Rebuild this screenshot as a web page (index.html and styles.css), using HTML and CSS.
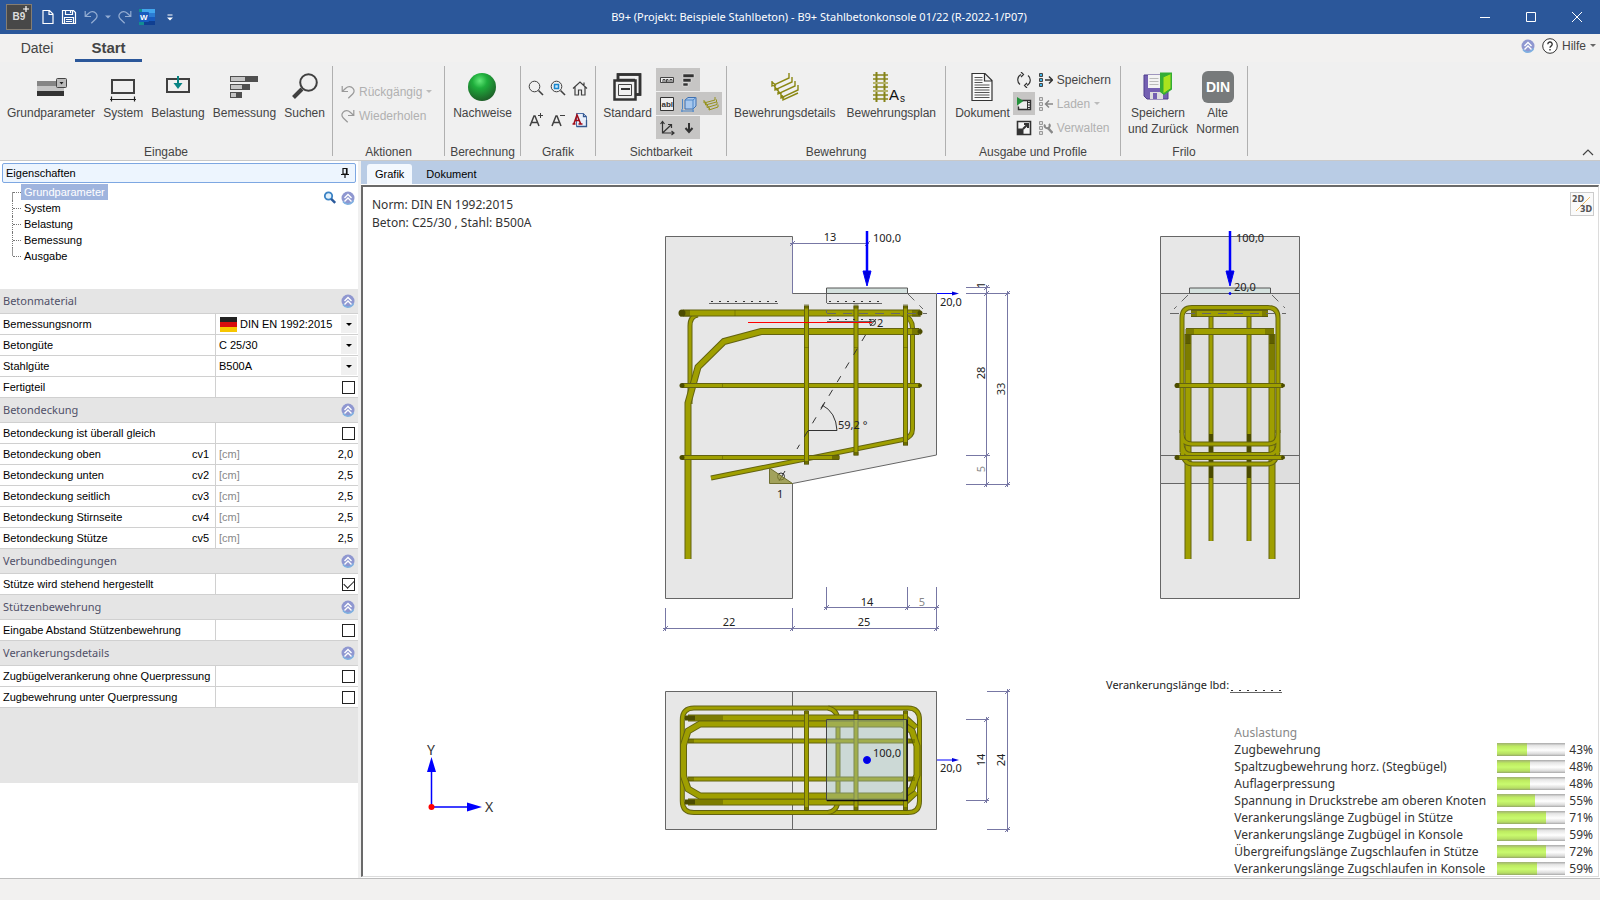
FILE: index.html
```html
<!DOCTYPE html>
<html lang="de">
<head>
<meta charset="utf-8">
<title>B9+ Stahlbetonkonsole</title>
<link rel="stylesheet" href="styles.css">
</head>
<body>
<svg class="defs" aria-hidden="true">
  <symbol id="chev" viewBox="0 0 14 14">
    <circle cx="7" cy="7" r="6.5" fill="#8f97d0"/><path d="M2 10.5a6 6 0 0 0 10.5-1" fill="none" stroke="#7fb2e2" stroke-width="1.5"/>
    <path d="M3.500 7 7 3.600 10.500 7M3.500 10.500 7 7.100 10.500 10.500" fill="none" stroke="#fff" stroke-width="1.400"/>
  </symbol>
  <symbol id="undo" viewBox="0 0 14 14"><path d="M1.200 1v5.500H7M1.500 6.200 5 3a4.800 4.800 0 0 1 7 .3c1.500 2 1.200 4.200-.3 5.700L7.300 13.300" fill="none" stroke="currentColor" stroke-width="1.200"/></symbol>
  <symbol id="redo" viewBox="0 0 14 14"><path d="M12.800 1v5.500H7M12.500 6.200 9 3a4.800 4.800 0 0 0-7 .3C.5 5.300.8 7.500 2.300 9l4.400 4.300" fill="none" stroke="currentColor" stroke-width="1.200"/></symbol>
  <symbol id="slots" viewBox="0 0 14 14"><path d="M.5.500h3v3h-3zM.5 5.500h3v3h-3zM.5 10.500h3v3h-3z" stroke="currentColor"/></symbol>
</svg>

<header class="titlebar">
  <div class="quick">
    <svg class="logo" viewBox="0 0 26 26"><rect x=".5" y=".5" width="25" height="25" fill="#484848" stroke="#857d72"/><path d="M20 2v6M17 5h6" stroke="#fff" stroke-width="1.200"/><text x="6.500" y="16" font-size="10" font-weight="700" fill="#ddd">B9</text></svg>
    <button aria-label="Neu"><svg width="12" height="16" viewBox="0 0 12 16"><path d="M1 1.500h6.500l3.500 3.500v9.500H1zM7 1.500V5.500h4" fill="none" stroke="#fff" stroke-width="1.200"/></svg></button>
    <button aria-label="Speichern"><svg width="16" height="16" viewBox="0 0 16 16"><path d="M1.500 1.500h11l2 2v11h-13zM4.500 1.500v4h7v-4M3.500 14.500v-6h9v6M5 10.500h6M5 12.500h6M9.500 2v2" fill="none" stroke="#fff" stroke-width="1.200"/></svg></button>
    <button aria-label="Rückgängig" class="pale"><svg width="14" height="14"><use href="#undo"/></svg></button>
    <button aria-label="Verlauf" class="pale"><svg width="6" height="4"><path d="M0 .5h6L3 3.500z" fill="currentColor"/></svg></button>
    <button aria-label="Wiederholen" class="pale"><svg width="14" height="14"><use href="#redo"/></svg></button>
    <button aria-label="Word"><svg width="16" height="16" viewBox="0 0 16 16"><path d="M3 0h13v4H3z" fill="#41a5ee"/><path d="M3 4h13v4H3z" fill="#2b7cd3"/><path d="M3 8h13v4H3z" fill="#185abd"/><path d="M3 12h13v4H3z" fill="#103f91"/><path d="M0 0h3v3H0zM0 13h5v3H0z" fill="#128d92"/><rect y="3" width="10" height="10" rx="1" fill="#185abd"/><text x="1" y="11" font-size="8" font-weight="700" fill="#fff">W</text></svg></button>
    <button aria-label="Anpassen" class="custom"><svg width="6" height="7"><path d="M.5 1h5" stroke="#fff"/><path d="M0 3.500h6L3 6.500z" fill="#fff"/></svg></button>
  </div>
  <h1 class="caption">B9+ (Projekt: Beispiele Stahlbeton) - B9+ Stahlbetonkonsole 01/22 (R-2022-1/P07)</h1>
  <div class="winctl">
    <button aria-label="Minimieren"><svg width="10" height="10"><path d="M0 5.500h10" stroke="#fff"/></svg></button>
    <button aria-label="Maximieren"><svg width="10" height="10"><path d="M.5.500h9v9h-9z" fill="none" stroke="#fff"/></svg></button>
    <button aria-label="Schließen"><svg width="10" height="10"><path d="M0 0 10 10M10 0 0 10" stroke="#fff"/></svg></button>
  </div>
</header>

<nav class="tabs">
  <button class="tab">Datei</button>
  <button class="tab active">Start</button>
  <div class="help">
    <svg width="14" height="14"><use href="#chev"/></svg>
    <svg width="16" height="16" viewBox="0 0 16 16"><circle cx="8" cy="8" r="7.300" fill="#fff" stroke="#333"/><path d="M5.800 6.200a2.200 2.200 0 1 1 3.300 1.900c-.8.500-1.100.8-1.100 1.700M8 11v1.500" fill="none" stroke="#333" stroke-width="1.400"/></svg>
    <button>Hilfe</button>
    <svg width="6" height="4"><path d="M0 0h6L3 3z" fill="#666"/></svg>
  </div>
</nav>

<section class="ribbon">
  <div class="group g-input">
    <div class="tools spread">
      <button class="big"><svg viewBox="0 0 32 32"><path d="M2 10h27v5H2z" fill="#858585"/><path d="M2 15h27v5H2z" fill="#c4c4c4"/><path d="M2 20h27v5H2z" fill="#333"/><rect x="21.500" y="7.500" width="10" height="9" rx="1" fill="#bbb" stroke="#444"/><path d="M24.500 11h4l-2 2.500z" fill="#222"/></svg>Grundparameter</button>
      <button class="big"><svg viewBox="0 0 32 32"><path d="M5 9h22v13H5z" fill="none" stroke="#404040" stroke-width="2"/><path d="M3 28.500h26M4.500 25.500v5M27.500 25.500v5" stroke="#222" stroke-width="1.200"/></svg>System</button>
      <button class="big"><svg viewBox="0 0 32 32"><path d="M5 8h22v13H5z" fill="none" stroke="#404040" stroke-width="2"/><path d="M16 5v8" stroke="#078383" stroke-width="2"/><path d="M11.500 12h9L16 18z" fill="#078383"/></svg>Belastung</button>
      <button class="big"><svg viewBox="0 0 32 32"><path d="M2 5h28v6H2zM2 13h20v6H2zM2 21h12v6H2z" fill="#505050"/><path d="M3 6h14v4H3zM3 14h11v4H3zM3 22h5v4H3z" fill="#c5c5c5"/></svg>Bemessung</button>
      <button class="big"><svg viewBox="0 0 32 32"><circle cx="19.500" cy="11.500" r="8.300" fill="none" stroke="#404040" stroke-width="2"/><path d="M13 18 4.500 26.500" stroke="#404040" stroke-width="4"/></svg>Suchen</button>
    </div>
    <h2>Eingabe</h2>
  </div>
  <div class="group g-actions">
    <div class="tools stack">
      <button class="small" disabled><svg width="14" height="14"><use href="#undo"/></svg>Rückgängig<svg width="6" height="4"><path d="M0 0h6L3 3z" fill="#bbb"/></svg></button>
      <button class="small" disabled><svg width="14" height="14"><use href="#redo"/></svg>Wiederholen</button>
    </div>
    <h2>Aktionen</h2>
  </div>
  <div class="group g-calc">
    <div class="tools">
      <button class="big"><svg viewBox="0 0 32 32"><defs><radialGradient id="ball" cx=".42" cy=".28" r=".75"><stop offset="0" stop-color="#63e878"/><stop offset=".35" stop-color="#1fae3c"/><stop offset="1" stop-color="#1e5a27"/></radialGradient></defs><circle cx="16" cy="16" r="14" fill="url(#ball)"/></svg>Nachweise</button>
    </div>
    <h2>Berechnung</h2>
  </div>
  <div class="group g-graphic">
    <div class="tools icons">
      <button aria-label="Zoom"><svg viewBox="0 0 16 16"><circle cx="6.500" cy="6.500" r="5.300" fill="none" stroke="#404040"/><path d="m10.500 10.500 4.500 4.500" stroke="#404040" stroke-width="1.600"/></svg></button>
      <button aria-label="Zoom Fenster"><svg viewBox="0 0 16 16"><circle cx="6.500" cy="6.500" r="5.300" fill="none" stroke="#404040"/><path d="m10.500 10.500 4.500 4.500" stroke="#404040" stroke-width="1.600"/><path d="M4.500 4.500h4v4h-4z" fill="#cfe9fb" stroke="#1787cf" stroke-width="1.500"/></svg></button>
      <button aria-label="Gesamtansicht"><svg viewBox="0 0 16 16"><path d="M1 8.500 8 2l7 6.500M3 7v8h3.500v-5h3v5H13V7M12 5V2.500" fill="none" stroke="#404040" stroke-width="1.200"/></svg></button>
      <button aria-label="Schrift größer"><svg viewBox="0 0 16 16"><path d="M2 14 6 4h1l4 10M3.500 10.500h6" fill="none" stroke="#404040" stroke-width="1.500"/><path d="M12.500 1v5M10 3.500h5" stroke="#404040"/></svg></button>
      <button aria-label="Schrift kleiner"><svg viewBox="0 0 16 16"><path d="M2 14 6 4h1l4 10M3.500 10.500h6" fill="none" stroke="#404040" stroke-width="1.500"/><path d="M10 3.500h5" stroke="#404040"/></svg></button>
      <button aria-label="Schriftart"><svg viewBox="0 0 16 16"><path d="M4.500 1.500h7l3 3v10h-10z" fill="#e8effb" stroke="#4a6fa8"/><path d="M11.500 1.500v3h3M14.500 8v6.500h-10" fill="none" stroke="#35588f" stroke-width="1.300"/><path d="M2 11.500 5 3l3.500 8.500M3.500 8.500h4M.5 12h3M6.500 12h4" fill="none" stroke="#a00d18" stroke-width="1.600"/></svg></button>
    </div>
    <h2>Grafik</h2>
  </div>
  <div class="group g-visible">
    <div class="tools">
      <button class="big"><svg viewBox="0 0 32 32"><path d="M7 3.500h22v20H7z" fill="#f0f0f0" stroke="#333" stroke-width="2.500"/><path d="M3.500 9.500h21v19h-21z" fill="#f0f0f0" stroke="#333" stroke-width="2.500"/><path d="M7.500 13.500h13v11h-13z" fill="none" stroke="#444"/><path d="M10 18h9" stroke="#333" stroke-width="2"/><path d="M7 9V3.500h22v20h-4M7 9h17" fill="none" stroke="#333" stroke-width="2.500"/></svg>Standard</button>
      <div class="toggles">
        <div class="trow">
          <button aria-label="Bemaßung"><svg viewBox="0 0 16 16"><path d="M1.500 5.500h13v5h-13z" fill="#eee" stroke="#444"/><path d="M4 10V7.500h2V10M7.500 10V7.500h1.500V10M11 10V7.500h2V10" fill="none" stroke="#444"/></svg></button>
          <button aria-label="Auslastung"><svg viewBox="0 0 16 16"><path d="M2 2h11v3.500H2zM2 6.500h8V10H2zM2 11h5v3H2z" fill="#333" stroke="#eee" stroke-width=".5"/></svg></button>
        </div>
        <div class="trow">
          <button aria-label="Text"><svg viewBox="0 0 16 16"><path d="M1.500 1.500h13v13h-13z" fill="#eee" stroke="#333"/><text x="2.500" y="11" font-size="8" font-weight="700" fill="#333">abl</text></svg></button>
          <button aria-label="Körper"><svg viewBox="0 0 16 16"><path d="M4 4 7 1.500h8V10l-3 3H4z" fill="#a8c8ee" stroke="#3f6fae"/><path d="M4 4h8v9M12 4l3-2.500M1.500 3v10M0 15h13M1 13v3M12 13v3" fill="none" stroke="#4d86c8"/></svg></button>
          <button aria-label="Bewehrung"><svg viewBox="0 0 16 16"><path d="M1 4v3l11-3V1M2.500 6.500v2.500l11-3V3.500M4 9v2.500l10-3V6M6 11.500V14l9-3V8.500M1.500 5l6 9" fill="none" stroke="#96921c"/></svg></button>
        </div>
        <div class="trow">
          <button aria-label="Koordinaten"><svg viewBox="0 0 16 16"><path d="M3.500 2v11h11M3.500 13 12 5M1.500 4l2-2.500 2 2.500M12.500 11l2.500 2-2.500 2M9 4.500h3.500V8" fill="none" stroke="#333" stroke-width="1.200"/></svg></button>
          <button aria-label="Last"><svg viewBox="0 0 16 16"><path d="M8 3v8" stroke="#333" stroke-width="2"/><path d="m4.500 8 3.500 4 3.500-4" fill="none" stroke="#333" stroke-width="2"/></svg></button>
        </div>
      </div>
    </div>
    <h2>Sichtbarkeit</h2>
  </div>
  <div class="group g-rebar">
    <div class="tools spread">
      <button class="big"><svg viewBox="0 0 32 32"><path d="M3 10v5l17-8V2M6 14v5l17-8V6M9 18v5l17-8v-5M12 22v5l17-8v-5M14 25v4l15-7M3 11l4 3.500M5 15l10 12" fill="none" stroke="#8a8712" stroke-width="1.400"/></svg>Bewehrungsdetails</button>
      <button class="big"><svg viewBox="0 0 32 32"><path d="M1.500 1v30M9.500 1v30" stroke="#86841a" stroke-width="2"/><path d="M-2 4h15M-2 8h15M-2 16h15M-2 24h15M-2 28h15" stroke="#86841a" stroke-width="1.300"/><path d="M-2 12h15M-2 20h15" stroke="#b5b36c" stroke-width="2"/><text x="14" y="29" font-size="15" fill="#111">A</text><text x="25" y="31" font-size="10" fill="#111">s</text></svg>Bewehrungsplan</button>
    </div>
    <h2>Bewehrung</h2>
  </div>
  <div class="group g-output">
    <div class="tools">
      <button class="big"><svg viewBox="0 0 32 32"><path d="M6 2.500h13l7 7v20H6zM18.500 3v7H26" fill="#fafafa" stroke="#333" stroke-width="1.200"/><path d="M8.500 6.500h8M8.500 9h8M8.500 11.500h8M8.500 14h15M8.500 16.500h15M8.500 19h15M8.500 21.500h15M8.500 24h15M8.500 26.500h15" stroke="#555"/></svg>Dokument</button>
      <div class="toggles plain">
        <button aria-label="Aktualisieren"><svg viewBox="0 0 16 16"><path d="M5 2.500A6 6 0 0 0 4 12.500M11 13.500A6 6 0 0 0 12 3.500M5 0l2.500 2.500L5 5M11 16l-2.500-2.500L11 11" fill="none" stroke="#333" stroke-width="1.200"/></svg></button>
        <button class="on" aria-label="Vorschau"><svg viewBox="0 0 16 16"><path d="M3.500 4.500h11v9h-12v-3" fill="#eee" stroke="#333" stroke-width="1.400"/><path d="M11.500 4.500v9M12 6.500h3M12 9h3M12 11.500h3" stroke="#333"/><path d="M1 1l6.500 4L1 9.500z" fill="#24923b"/></svg></button>
        <button aria-label="Extern öffnen"><svg viewBox="0 0 16 16"><path d="M1.500 1.500h13v13h-13z" fill="#f5f5f5" stroke="#333" stroke-width="1.600"/><path d="M1 8.500h6.500V15H1z" fill="#333"/><path d="m7 9 5-5M8 4h4v4" fill="none" stroke="#333" stroke-width="2"/></svg></button>
      </div>
      <div class="stack tight">
        <button class="small"><svg width="14" height="14" viewBox="0 0 14 14"><use href="#slots" fill="#42b3e6"/><path d="M6 7h7M10 3.500 13.500 7 10 10.500" fill="none" stroke="#333" stroke-width="1.500"/></svg>Speichern</button>
        <button class="small" disabled><svg width="14" height="14" viewBox="0 0 14 14"><use href="#slots" fill="#ddd"/><path d="M7 7h7M10 3.500 6.500 7l3.500 3.500" fill="none" stroke="#888" stroke-width="1.500"/></svg>Laden<svg width="6" height="4"><path d="M0 0h6L3 3z" fill="#bbb"/></svg></button>
        <button class="small" disabled><svg width="14" height="14" viewBox="0 0 14 14"><use href="#slots" fill="#ddd"/><path d="m8.500 6.500 5 5.500" stroke="#888" stroke-width="2.500"/><path d="M6 3.500a2.500 2.500 0 1 0 4-.5" fill="none" stroke="#888" stroke-width="2"/></svg>Verwalten</button>
      </div>
    </div>
    <h2>Ausgabe und Profile</h2>
  </div>
  <div class="group g-frilo">
    <div class="tools spread">
      <button class="big"><svg viewBox="0 0 32 32"><path d="M2 4h24v24H5l-3-3z" fill="#7460b2" stroke="#4e3d8c"/><path d="M6 4h13v13H6z" fill="#f3f3f3"/><path d="M7.500 7.500h9M7.500 10.500h9M7.500 13.500h9" stroke="#bbb"/><path d="M8 21h13v7H8z" fill="#ddd"/><path d="M11 22h4v6h-4z" fill="#7460b2"/><path d="M18 1.500h12v17l-8 5.500-4-3z" fill="#35ad35"/><path d="m21 6 8-3.500v15L21 23z" fill="#a9e31e" stroke="#35ad35"/></svg>Speichern<br>und Zurück</button>
      <button class="big"><svg viewBox="0 0 32 32"><rect width="32" height="32" rx="6" fill="#777a7b"/><text x="16" y="21" text-anchor="middle" font-size="14" font-weight="700" fill="#fff">DIN</text></svg>Alte<br>Normen</button>
    </div>
    <h2>Frilo</h2>
  </div>
  <button class="collapse" aria-label="Menüband reduzieren"><svg width="12" height="7"><path d="M1 6 6 1l5 5" fill="none" stroke="#444" stroke-width="1.200"/></svg></button>
</section>

<main class="main">
  <aside class="props">
    <div class="phead"><span>Eigenschaften</span><svg width="8" height="10" viewBox="0 0 8 10"><path d="M2 .5h4V6H2zM5.500 1v5M0 6.500h8M4 6.500V10" fill="none" stroke="#111" stroke-width="1.200"/></svg></div>
    <div class="treebox">
      <ul class="tree">
        <li><a href="#gp" class="sel">Grundparameter</a></li>
        <li><a href="#sys">System</a></li>
        <li><a href="#bel">Belastung</a></li>
        <li><a href="#bem">Bemessung</a></li>
        <li><a href="#aus">Ausgabe</a></li>
      </ul>
      <div class="treetools">
        <svg width="14" height="14" viewBox="0 0 14 14"><circle cx="5.500" cy="5" r="3.700" fill="#e2f1fc" stroke="#3b82c4" stroke-width="1.800"/><path d="m8.200 7.800 4 4" stroke="#2a5a9c" stroke-width="2.500"/></svg>
        <svg width="14" height="14"><use href="#chev"/></svg>
      </div>
    </div>
    <h3 id="gp">Betonmaterial<svg width="14" height="14"><use href="#chev"/></svg></h3>
    <div class="row"><label for="norm">Bemessungsnorm</label><div class="val"><svg class="flag" width="17" height="15"><path d="M0 0h17v5H0z" fill="#222"/><path d="M0 5h17v5H0z" fill="#d80d0d"/><path d="M0 10h17v5H0z" fill="#f7c600"/></svg><select id="norm"><option>DIN EN 1992:2015</option></select><span class="drop"></span></div></div>
    <div class="row"><label for="beton">Betongüte</label><div class="val"><select id="beton"><option>C 25/30</option></select><span class="drop"></span></div></div>
    <div class="row"><label for="stahl">Stahlgüte</label><div class="val"><select id="stahl"><option>B500A</option></select><span class="drop"></span></div></div>
    <div class="row"><label for="fertig">Fertigteil</label><div class="val"><input type="checkbox" id="fertig"></div></div>
    <h3>Betondeckung<svg width="14" height="14"><use href="#chev"/></svg></h3>
    <div class="row"><label for="gleich">Betondeckung ist überall gleich</label><div class="val"><input type="checkbox" id="gleich"></div></div>
    <div class="row"><label for="cv1">Betondeckung oben<span>cv1</span></label><div class="val"><span class="unit">[cm]</span><input type="text" id="cv1" value="2,0"></div></div>
    <div class="row"><label for="cv2">Betondeckung unten<span>cv2</span></label><div class="val"><span class="unit">[cm]</span><input type="text" id="cv2" value="2,5"></div></div>
    <div class="row"><label for="cv3">Betondeckung seitlich<span>cv3</span></label><div class="val"><span class="unit">[cm]</span><input type="text" id="cv3" value="2,5"></div></div>
    <div class="row"><label for="cv4">Betondeckung Stirnseite<span>cv4</span></label><div class="val"><span class="unit">[cm]</span><input type="text" id="cv4" value="2,5"></div></div>
    <div class="row"><label for="cv5">Betondeckung Stütze<span>cv5</span></label><div class="val"><span class="unit">[cm]</span><input type="text" id="cv5" value="2,5"></div></div>
    <h3>Verbundbedingungen<svg width="14" height="14"><use href="#chev"/></svg></h3>
    <div class="row"><label for="stehend">Stütze wird stehend hergestellt</label><div class="val"><input type="checkbox" id="stehend" checked></div></div>
    <h3>Stützenbewehrung<svg width="14" height="14"><use href="#chev"/></svg></h3>
    <div class="row"><label for="abstand">Eingabe Abstand Stützenbewehrung</label><div class="val"><input type="checkbox" id="abstand"></div></div>
    <h3>Verankerungsdetails<svg width="14" height="14"><use href="#chev"/></svg></h3>
    <div class="row"><label for="zugb">Zugbügelverankerung ohne Querpressung</label><div class="val"><input type="checkbox" id="zugb"></div></div>
    <div class="row"><label for="zugq">Zugbewehrung unter Querpressung</label><div class="val"><input type="checkbox" id="zugq"></div></div>
    <div class="filler"></div>
  </aside>

  <section class="work">
    <div class="doctabs"><button class="doctab active">Grafik</button><button class="doctab">Dokument</button></div>
    <div class="canvas">
      <svg class="drawing" viewBox="363 187 1235 689" preserveAspectRatio="xMinYMin meet">
        <defs>
          <path id="s1" d="M698 315Q690 316 690 326V404M902 314Q912.500 318 912.500 328V429Q912.500 437 903 439.500L711 478"/>
          <path id="s2" d="M688 559V403L698 367 724 341.500 761 331.500H919"/>
          <path id="s3" d="M683 313H920"/>
          <path id="s4" d="M682 385.500H920M682 457.500H839"/>
          <path id="s5" d="M806.500 306V464M856 306V455M905.500 306V445"/>
          <path id="p1" d="M694 708H908Q919.500 708 919.500 720V801Q919.500 812.500 908 812.500H694Q682.300 812.500 682.300 801V720Q682.300 708 694 708Z"/>
          <path id="p2" d="M828 708Q838 710 838 722V799Q838 811 828 812.500"/>
          <path id="p3" d="M688 718H905L916 728M688 802H905L916 792"/>
          <path id="p4" d="M700 724H902L912 731 917 746V775L912 789 902 796H700L688 789 683.500 776V745L688 731Z"/>
          <path id="p5" d="M688 741H914M688 779H914"/>
          <path id="p6" d="M806.500 711V810M856 711V810M905.500 711V810"/>
          <path id="f1" d="M1211 315V541M1249 315V541"/>
          <path id="f2" d="M1188 334V559M1272 334V559"/>
          <path id="f3" d="M1186 331.500H1274"/>
          <path id="f4" d="M1191 313.500H1268"/>
          <path id="f5" d="M1182 433V318Q1182 307.500 1192 307.500H1268Q1278 307.500 1278 318V433"/>
          <path id="f6" d="M1182 434Q1182 444 1192 444H1268Q1278 444 1278 434M1182 443Q1182 454.500 1192 454.500H1268Q1278 454.500 1278 443M1182 452Q1184 464 1193 464H1267Q1276 464 1278 452M1182 430V452M1278 430V452"/>
          <path id="f7" d="M1176 385.500H1283M1176 457.500H1283"/>
        </defs>

        <g class="concrete">
          <path d="M665.500 236.500H792.500V293.500H936.500V455L792.500 483.500V598.500H665.500Z"/>
          <path d="M665.500 691.500H936.500V829.500H665.500ZM792.500 691.500V829.500"/>
          <path d="M1160.500 236.500H1299.500V598.500H1160.500Z"/>
          <path class="face" d="M1160.500 293.500H1299.500V483.500H1160.500ZM1160.500 455.500H1299.500"/>
        </g>
        <g class="plate"><path d="M826.500 288H907.500V293.500H826.500ZM1189.500 288H1270.500V293.500H1189.500Z"/></g>

        <g class="bars">
          <use href="#s1" class="e5"/><use href="#s1" class="c5"/>
          <use href="#s2" class="e7"/><use href="#s2" class="c7"/>
          <use href="#s3" class="e7"/><use href="#s3" class="c7"/>
          <use href="#s4" class="e5"/><use href="#s4" class="c5"/>
          <use href="#s5" class="e5"/><use href="#s5" class="c5"/>
        </g>
        <g class="shade">
          <path d="M680 310h10v7h-10zM912 310h9v7h-9zM912 328h9v7h-9z" opacity=".45"/>
          <circle cx="682" cy="313" r="3.500"/><circle cx="682" cy="385.500" r="2.500"/><circle cx="682" cy="457.500" r="2.500"/><circle cx="920" cy="313" r="2.500"/><circle cx="920" cy="331.500" r="2.500"/><circle cx="920" cy="385.500" r="2"/>
          <path d="M804 304.500h5v4h-5zM853.500 304.500h5v4h-5zM903 304.500h5v4h-5zM804 461h5v4h-5zM853.500 452h5v4h-5zM903 442h5v4h-5zM832 455.500h8v4h-8z" opacity=".6"/>
          <path d="M734.500 310h1v6h-1zM722 384h1v3h-1zM722 456h1v3h-1zM804.500 347h4v1h-4zM854 347h4v1h-4zM903.500 347h4v1h-4z" opacity=".4"/>
        </g>

        <g class="bars">
          <use href="#p1" class="e5"/><use href="#p1" class="c5"/>
          <use href="#p2" class="e5"/><use href="#p2" class="c5"/>
          <use href="#p5" class="e5"/><use href="#p5" class="c5"/>
          <use href="#p3" class="e7"/><use href="#p3" class="c7"/>
          <use href="#p4" class="e7"/><use href="#p4" class="c7"/>
          <use href="#p6" class="e5"/><use href="#p6" class="c5"/>
        </g>
        <g class="shade">
          <path d="M685 715.500h10v5h-10zM685 799.500h10v5h-10z"/>
          <path d="M695 715.500h28v5h-28zM695 799.500h28v5h-28zM688 739h6v4h-6zM688 777h6v4h-6zM909 739h6v4h-6zM909 777h6v4h-6z" opacity=".4"/>
          <path d="M804.500 710h4v4h-4zM854 710h4v4h-4zM903.500 710h4v4h-4zM804.500 807h4v4h-4zM854 807h4v4h-4zM903.500 807h4v4h-4z" opacity=".5"/>
        </g>

        <g class="bars">
          <use href="#f1" class="e5"/><use href="#f1" class="c5"/>
          <use href="#f2" class="e7"/><use href="#f2" class="c7"/>
        </g>
        <g class="shade">
          <path d="M1209 434h4v44h-4zM1247 434h4v44h-4z"/>
          <path d="M1185.500 343h5v27h-5zM1269.500 343h5v27h-5z" opacity=".4"/>
          <path d="M1185.500 334h5v10h-5zM1269.500 334h5v10h-5z" opacity=".8"/>
        </g>
        <g class="bars">
          <use href="#f3" class="e7"/><use href="#f3" class="c7"/>
          <use href="#f4" class="e7"/><use href="#f4" class="c7"/>
          <use href="#f6" class="e5"/><use href="#f6" class="c5"/>
          <use href="#f5" class="e5"/><use href="#f5" class="c5"/>
          <use href="#f7" class="e5"/><use href="#f7" class="c5"/>
        </g>
        <g class="shade"><path d="M1185 329h9v6h-9zM1265 329h9v6h-9zM1191 311h6v6h-6zM1262 311h6v6h-6z" opacity=".4"/><circle cx="1177" cy="385.500" r="2.500"/><circle cx="1177" cy="457.500" r="2.500"/><circle cx="1283" cy="385.500" r="2"/><circle cx="1283" cy="457.500" r="2"/></g>

        <path d="M826.500 719.500H907.500V800.500H826.500Z" fill="#a5c5bd" fill-opacity=".4" stroke="#444"/>
        <path d="M907 720V800.500H827" fill="none" stroke="#111" stroke-width="1.500"/>

        <g class="fine">
          <path d="M709 303.500H778M827 303.500H882M827 321.500H875M1230 692.500H1282" stroke="#666"/>
          <path d="M711 301.500H778M829 301.500H882M829 319.500H875M1231 690.500H1282" stroke-dasharray="2 6"/>
          <path d="M826.500 294V313M827 313.500H927M908 294 923 309M1188 295 1174 309M1170 313.500H1286M1272 295 1285 308" stroke-dasharray="9 7" stroke="#666"/>
          <path d="M865.500 335 797 449" stroke-dasharray="7 9"/>
          <path d="M808 430.500H837Q836 412 822 405M821 408l4-6"/>
          <circle cx="781" cy="476.500" r="3.500"/><path d="M779 481 785 471"/>
          <circle cx="872.500" cy="322.500" r="3"/><path d="M870 326 876 319"/>
        </g>
        <path d="M769.500 468V483.500H792.500Z" fill="#8b8b2e" fill-opacity=".75" stroke="#6f6f30"/>
        <path d="M748 322.500H872" stroke="#f00"/>

        <g class="dim">
          <path d="M792.500 240V293M790 243.500H869M790 246l5-5M865 246l5-5"/>
          <path d="M966 287.500H990M966 293.500H1010M966 455.500H990M966 484.500H1010M986.500 285V487M1007.500 291V487M984 290l5-5M984 296l5-5M984 458l5-5M984 487l5-5M1005 296l5-5M1005 487l5-5"/>
          <path d="M665.500 608V631M792.500 608V631M936.500 587V631M826.500 587V610M907.500 587V610M663 628.500H939M824 607.500H939M663 631l5-5M790 631l5-5M934 631l5-5M824 610l5-5M905 610l5-5M934 610l5-5"/>
          <path d="M966 719.500H989M966 800.500H989M986.500 717V803M987 691.500H1010M987 829.500H1010M1007.500 689V832M984 722l5-5M984 803l5-5M1005 694l5-5M1005 832l5-5"/>
        </g>

        <g class="force">
          <path d="M867 231V274M1230 231V274" stroke-width="2.500"/>
          <path d="M863 271H871L867 286ZM1226 271H1234L1230 286Z"/>
          <path d="M937 293.500H953M937 760H953"/>
          <path d="M952 291.500 959 293.500 952 295.500ZM952 758 959 760 952 762Z" stroke="none"/>
          <circle cx="867" cy="760" r="3.500"/><circle cx="1230" cy="293.500" r="1"/>
        </g>

        <g class="axis">
          <path d="M431.500 807V765M431.500 807H472" stroke="#00f" stroke-width="1.500"/>
          <path d="M427 772 431.500 757 436 772ZM467 802.500 482 807 467 811.500Z" fill="#00f"/>
          <circle cx="431.500" cy="807" r="3" fill="#f00"/>
          <text x="427" y="755">Y</text><text x="485" y="812">X</text>
        </g>

        <g class="num">
          <text x="830" y="241" class="mid">13</text><text x="873" y="242">100,0</text><text x="940" y="306">20,0</text>
          <text x="877" y="327">2</text><text x="838" y="429">59,2 °</text><text x="777" y="498">1</text>
          <text x="867" y="606" class="mid">14</text><text x="922" y="606" class="mid soft">5</text><text x="729" y="626" class="mid">22</text><text x="864" y="626" class="mid">25</text>
          <text x="873" y="757">100,0</text><text x="940" y="772">20,0</text>
          <text x="1236" y="242">100,0</text><text x="1234" y="291">20,0</text>
          <text x="1106" y="689">Verankerungslänge lbd:</text>
          <text transform="translate(985 285) rotate(-90)" class="mid">1</text>
          <text transform="translate(985 373) rotate(-90)" class="mid">28</text>
          <text transform="translate(985 469) rotate(-90)" class="mid soft">5</text>
          <text transform="translate(1005 389) rotate(-90)" class="mid">33</text>
          <text transform="translate(985 760) rotate(-90)" class="mid">14</text>
          <text transform="translate(1005 760) rotate(-90)" class="mid">24</text>
        </g>
      </svg>
      <p class="info">Norm: DIN EN 1992:2015<br>Beton: C25/30 , Stahl: B500A</p>
      <button class="view" aria-label="2D/3D"><svg width="22" height="22" viewBox="0 0 22 22"><path d="M5 18 19 4" stroke="#f0bd68"/><text x="1" y="9">2D</text><text x="9" y="19">3D</text></svg></button>
      <table class="usage">
        <caption>Auslastung</caption>
        <tr><td>Zugbewehrung</td><td><div class="bar"><i style="width:43%"></i></div></td><td>43%</td></tr>
        <tr><td>Spaltzugbewehrung horz. (Stegbügel)</td><td><div class="bar"><i style="width:48%"></i></div></td><td>48%</td></tr>
        <tr><td>Auflagerpressung</td><td><div class="bar"><i style="width:48%"></i></div></td><td>48%</td></tr>
        <tr><td>Spannung in Druckstrebe am oberen Knoten</td><td><div class="bar"><i style="width:55%"></i></div></td><td>55%</td></tr>
        <tr><td>Verankerungslänge Zugbügel in Stütze</td><td><div class="bar"><i style="width:71%"></i></div></td><td>71%</td></tr>
        <tr><td>Verankerungslänge Zugbügel in Konsole</td><td><div class="bar"><i style="width:59%"></i></div></td><td>59%</td></tr>
        <tr><td>Übergreifungslänge Zugschlaufen in Stütze</td><td><div class="bar"><i style="width:72%"></i></div></td><td>72%</td></tr>
        <tr><td>Verankerungslänge Zugschlaufen in Konsole</td><td><div class="bar"><i style="width:59%"></i></div></td><td>59%</td></tr>
      </table>
    </div>
  </section>
</main>
<footer class="status"></footer>
</body>
</html>
```
FILE: styles.css
```css
* { box-sizing: border-box; }
body {
  margin: 0;
  min-height: 100vh;
  display: flex;
  flex-direction: column;
  font: 12px/16px "Liberation Sans", Arial, sans-serif;
  color: #444;
  background: #f0f0f0;
}
button { font: inherit; color: inherit; background: none; border: 0; padding: 0; }
h1, h2, h3, p, ul { margin: 0; padding: 0; font-weight: 400; }
svg { flex: none; display: block; }
.defs { position: absolute; width: 0; height: 0; }

/* title bar */
.titlebar { display: flex; align-items: center; height: 34px; background: #2b579a; color: #fff; }
.quick { display: flex; align-items: center; width: 176px; padding-left: 6px; gap: 7px; }
.quick .logo { width: 26px; height: 26px; margin-right: 3px; }
.quick .pale { color: #93acd2; }
.quick .custom { margin-left: 5px; }
.caption { flex: 1; text-align: center; font: 11px/16px "Noto Sans", "Open Sans", sans-serif; }
.winctl { display: flex; }
.winctl button { width: 46px; height: 34px; display: flex; align-items: center; justify-content: center; }

/* ribbon tabs */
.tabs { display: flex; height: 28px; background: #f2f1f0; }
.tab { font-size: 14px; padding: 2px 0 0; border-bottom: 3px solid transparent; }
.tab:first-child { width: 74px; margin-right: 1px; }
.tab.active { width: 67px; font-size: 15px; font-weight: 700; border-color: #2b579a; }
.help { margin-left: auto; display: flex; align-items: center; gap: 4px; padding: 0 4px 5px 0; }
.help svg:first-child { margin-right: 3px; }

/* ribbon */
.ribbon { display: flex; height: 99px; padding: 4px 0; border-bottom: 1px solid #c9c9c9; }
.group { display: flex; flex-direction: column; justify-content: space-between; border-right: 1px solid #b0b0b0; flex: none; }
.group h2 { text-align: center; font-size: 12px; line-height: 16px; height: 12px; }
.tools { display: flex; align-items: flex-start; justify-content: center; height: 74px; }
.tools.spread { justify-content: space-between; padding: 0 7px; }
.g-input { width: 333px; }
.g-actions { width: 112px; }
.g-calc { width: 76px; }
.g-graphic { width: 75px; }
.g-visible { width: 131px; }
.g-rebar { width: 219px; }
.g-output { width: 175px; }
.g-frilo { width: 127px; }
.big { display: flex; flex-direction: column; align-items: center; padding-top: 5px; line-height: 16px; white-space: nowrap; }
.big svg { width: 32px; height: 32px; margin-bottom: 2px; overflow: visible; }
.tools.stack { flex-direction: column; align-items: flex-start; justify-content: flex-start; padding: 14px 0 0 8px; }
.small { display: flex; align-items: center; gap: 4px; height: 24px; white-space: nowrap; }
.small:disabled { color: #b0b0b0; }
.stack .small:disabled svg { color: #999; }
.stack.tight { padding-top: 2px; }
.tools.icons { display: grid; grid-template-columns: repeat(3, 22px); grid-template-rows: 32px 32px; align-content: start; height: 78px; margin-bottom: -4px; padding-top: 14px; }
.icons button, .toggles button { display: flex; align-items: center; justify-content: center; }
.icons button { height: 16px; }
.icons svg, .toggles svg { width: 16px; height: 16px; }
.toggles { display: flex; flex-direction: column; gap: 1px; padding-top: 2px; margin-left: 4px; }
.g-visible .tools { padding-left: 3px; }
.trow { display: flex; align-self: flex-start; background: #c6c5c4; }
.toggles button { width: 22px; height: 23px; }
.plain { margin: 0 4px 0 3px; }
.toggles .on { background: #c6c5c4; }
.g-frilo .tools { padding-right: 8px; }
.g-rebar .tools { padding-right: 9px; }
.collapse { margin: auto 6px 0 auto; height: 8px; }

/* main split */
.main { flex: 1; display: flex; }
.props { width: 358px; background: #fff; color: #000; font-size: 11px; line-height: 16px; }
.phead { display: flex; align-items: center; justify-content: space-between; height: 20px; margin: 2px 2px 1px; padding: 0 6px 0 3px; border: 1px solid #7da7e2; border-radius: 2px; background: #edf5fe; }
.treebox { display: flex; justify-content: space-between; height: 105px; padding: 0 3px 0 12px; }
.tree { list-style: none; }
.tree li { display: flex; align-items: center; height: 16px; border-left: 1px dotted #777; }
.tree li::before { content: ""; width: 8px; border-top: 1px dotted #777; }
.tree li:first-child { border-image: linear-gradient(transparent 50%, #999 50%) 1; }
.tree li:last-child { border-image: linear-gradient(#999 50%, transparent 50%) 1; }
.tree a { color: #000; text-decoration: none; padding: 0 3px; }
.tree .sel { background: #9fb4de; color: #fff; }
.treetools { display: flex; gap: 4px; padding-top: 7px; }
.props h3 { display: flex; align-items: center; justify-content: space-between; height: 25px; padding: 0 3px; background: #e5e5e5; border-bottom: 1px solid #d0d0d0; color: #505068; font: 11px/16px "Noto Sans", "Open Sans", sans-serif; }
.row { display: flex; height: 21px; border-bottom: 1px solid #d0d0d0; }
.row label { display: flex; align-items: center; justify-content: space-between; width: 216px; padding: 0 6px 0 3px; border-right: 1px solid #d0d0d0; white-space: nowrap; }
.val { flex: 1; display: flex; align-items: center; justify-content: flex-end; padding-left: 3px; min-width: 0; }
.flag { margin: 0 3px 0 1px; }
.val select { flex: 1; min-width: 0; appearance: none; border: 0; padding: 0; background: none; font: inherit; color: inherit; }
.drop { width: 16px; height: 18px; margin-right: 1px; background: #f0f0f0; display: flex; align-items: center; justify-content: center; }
.drop::before { content: ""; border: 3px solid transparent; border-top-color: #000; border-bottom: 0; }
.unit { color: #888; }
.val input[type="text"] { flex: 1; min-width: 0; border: 0; padding: 0 5px 0 0; background: none; text-align: right; font: inherit; color: inherit; }
.val input[type="checkbox"] { appearance: none; width: 13px; height: 13px; margin: 0 3px 0 0; border: 1px solid #222; background: #fff; display: flex; align-items: flex-start; justify-content: center; }
.val input:checked::before { content: ""; width: 9px; height: 5px; margin-top: 1px; border: 1px solid #222; border-width: 0 0 1px 1px; transform: rotate(-45deg); }
.filler { height: 75px; background: #e5e5e5; }

/* work area */
.work { flex: 1; min-width: 0; margin-left: 3px; display: flex; flex-direction: column; background: #fff; }
.doctabs { display: flex; height: 24px; padding: 3px 0 0 6px; background: #b9cce5; border-bottom: 1px solid #fff; color: #000; }
.doctab { padding: 0 14px; font-size: 11px; }
.doctab.active { padding: 0 8px; background: #f3f8fe; border-radius: 3px 3px 0 0; }
.canvas { flex: 1; position: relative; margin: 0 1px 1px 0; border: 1px solid #dcdcdc; border-top: 2px solid #6a6a6a; border-left: 2px solid #6a6a6a; background: #fff; font-family: "Noto Sans", "Open Sans", sans-serif; color: #333; }
.drawing { width: 100%; height: auto; }
.info { position: absolute; left: 9px; top: 9px; font-size: 12px; line-height: 18px; }
.view { position: absolute; right: 4px; top: 5px; border: 1px solid #ccc; background: #fafafa; }
.view text { font: 700 8px "DejaVu Sans", sans-serif; fill: #555; }
.usage { position: absolute; right: 5px; bottom: -1px; border-collapse: collapse; font-size: 12px; line-height: 17px; }
.usage caption { text-align: left; color: #888; }
.usage td { padding: 0; height: 17px; white-space: nowrap; }
.usage td:first-child { width: 263px; }
.usage td:last-child { padding-left: 4px; }
.bar { width: 68px; height: 13px; background: linear-gradient(#a8a8a8, #e6e6e6 20%, #fff 55%, #dadada 85%, #a8a8a8); }
.bar i { display: block; height: 100%; background: linear-gradient(#9fb070, #bdea60 25%, #c9fa6e 55%, #b5dd62 85%, #93a568); }

/* drawing */
.concrete path { fill: #e7e7e7; stroke: #666; }
.concrete .face { fill: #dedede; }
.plate path { fill: #d5e2df; stroke: #555; }
.bars use { fill: none; }
.e5 { stroke: #636310; stroke-width: 5px; }
.c5 { stroke: #9f9f00; stroke-width: 3px; }
.e7 { stroke: #636310; stroke-width: 7px; }
.c7 { stroke: #9f9f00; stroke-width: 5px; }
.shade { fill: #4c4c00; }
.fine { fill: none; stroke: #333; }
.dim { fill: none; stroke: #7777a4; }
.force { fill: #00d; stroke: #00f; }
.axis text { font-size: 14px; fill: #333; }
.num text { font-size: 11px; fill: #222; }
.num .mid { text-anchor: middle; }
.num .soft { fill: #888; }

.status { height: 22px; border-top: 1px solid #bdbdbd; background: #f2f1f0; }
```
